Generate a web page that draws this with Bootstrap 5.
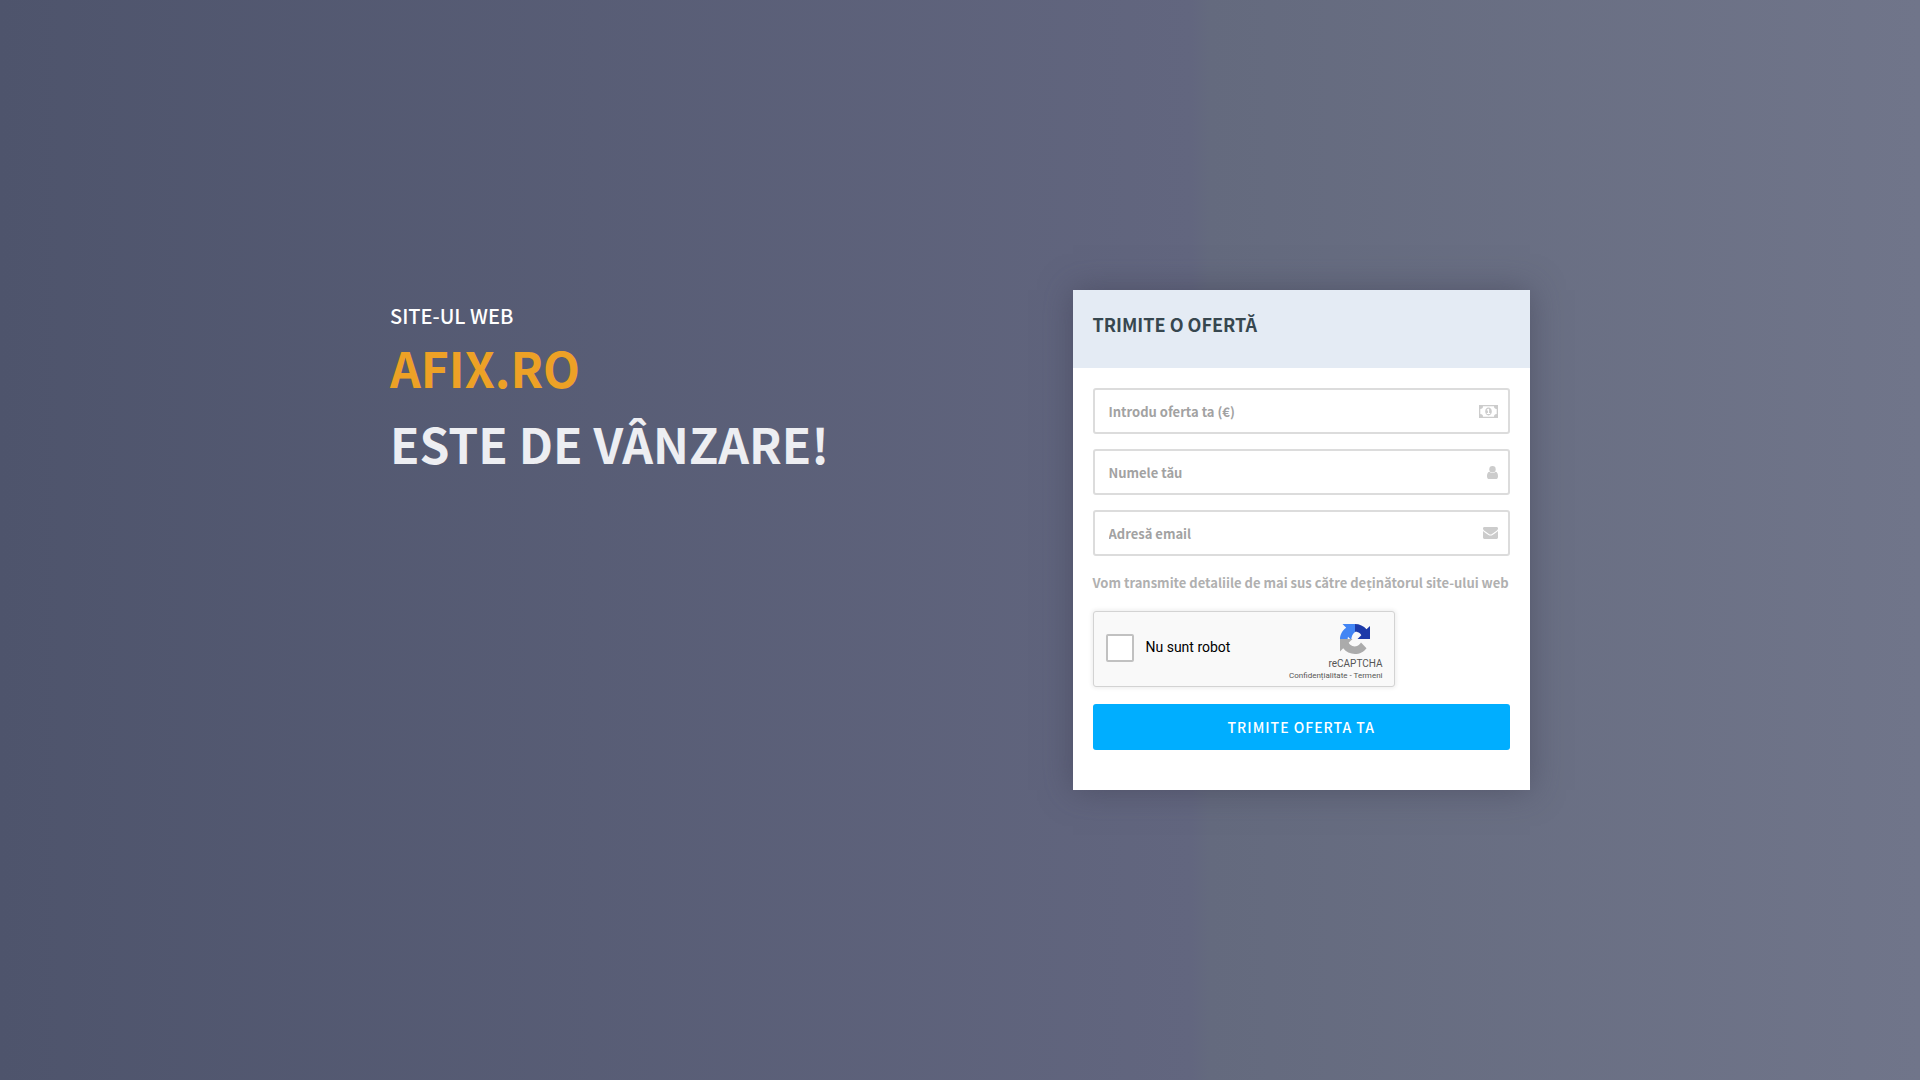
<!DOCTYPE html>
<html lang="ro">
<head>
<meta charset="utf-8">
<meta name="viewport" content="width=device-width, initial-scale=1">
<title>afix.ro este de vânzare</title>
<link href="https://cdn.jsdelivr.net/npm/bootstrap@5.3.0/dist/css/bootstrap.min.css" rel="stylesheet">
<style>
  body {
    font-family: "Noto Sans CJK SC", "Noto Sans", sans-serif;
    font-weight: 500;
    background: linear-gradient(90deg, #4e546c 0%, #62667f 62%, #646a7e 63%, #70758a 100%);
  }
  .sale-container { max-width: 1170px; --bs-gutter-x: 30px; }
  .sale-row { --bs-gutter-x: 30px; }
  .intro-col { padding-top: 14px; }
  .intro { font-size: 20px; line-height: 24px; color: #fff; }
  .domain, .slogan { font-size: 48px; line-height: 60px; font-weight: 700; }
  .domain { color: #eda126; margin: 9px 0 16px; }
  .slogan { color: #edeef2; }
  .offer { box-shadow: 0 0 30px rgba(60, 60, 80, .5); }
  .offer-head { background: #e4ebf4; min-height: 78px; padding: 20px; }
  .offer-head h2 { font-size: 18px; line-height: 28px; font-weight: 700; color: #37474f; }
  .offer-body { padding: 20px 20px 40px; }
  .field-wrap { margin-bottom: 15px; }
  .offer-field { height: 46px; border: 2px solid #dcdcdc; border-radius: 3px; padding: 0 14px; font-size: 13px; font-weight: 700; }
  .offer-field::placeholder { color: #a2a2a2; }
  .field-icon { right: 12px; top: 0; height: 46px; color: #ccc; }
  .hint { font-size: 13px; line-height: 20px; font-weight: 700; color: #b0b0b0; margin: 17px 0 18px; white-space: nowrap; }
  .captcha { font-family: Roboto, sans-serif; font-weight: 400; width: 302px; max-width: 100%; height: 76px; background: #f9f9f9; border: 1px solid #d3d3d3; border-radius: 3px; box-shadow: 0 0 4px 1px rgba(0, 0, 0, .08); padding: 0 11px 0 12px; margin-bottom: 17px; }
  .captcha-check { padding-bottom: 3px; }
  .captcha-box { appearance: none; width: 28px; height: 28px; border: 2px solid #c1c1c1; border-radius: 2px; background: #fff; }
  .captcha-label { font-size: 14px; line-height: 17px; color: #000; }
  .captcha-mark { padding-top: 7px; }
  .captcha-mark svg { margin: 0 9px 4px 0; }
  .captcha-brand { font-size: 10px; line-height: 12px; color: #555; }
  .captcha-links { font-size: 8px; line-height: 12px; color: #555; }
  .offer-btn { height: 46px; border-radius: 3px; background: #00aeff; color: #fff; font-size: 14px; font-weight: 500; letter-spacing: 1px; }
  .offer-btn:hover { background: #0098e0; color: #fff; }
</style>
<script src="https://cdn.jsdelivr.net/npm/bootstrap@5.3.0/dist/js/bootstrap.bundle.min.js"></script>
</head>
<body>
<main class="container sale-container min-vh-100 d-flex flex-column justify-content-center">
  <div class="row sale-row">
    <div class="col-md-7 intro-col">
      <h1 class="mb-0">
        <span class="intro d-block text-uppercase">Site-ul web</span>
        <span class="domain d-block text-uppercase">afix.ro</span>
        <span class="slogan d-block text-uppercase">Este de vânzare!</span>
      </h1>
    </div>
    <div class="col-md-5">
      <form class="offer bg-white" onsubmit="return false">
        <div class="offer-head"><h2 class="m-0 text-uppercase">Trimite o ofertă</h2></div>
        <div class="offer-body">
          <div class="position-relative field-wrap">
            <input class="form-control offer-field" type="text" placeholder="Introdu oferta ta (€)" aria-label="Introdu oferta ta (€)">
            <span class="field-icon position-absolute d-flex align-items-center pe-none">
              <svg width="19" height="13" viewBox="0 0 19 13" aria-hidden="true"><path fill="currentColor" fill-rule="evenodd" d="M0 0h19v13H0zM4 1.3A2.7 2.7 0 0 1 1.3 4v5A2.7 2.7 0 0 1 4 11.700h11A2.700 2.700 0 0 1 17.700 9V4A2.700 2.700 0 0 1 15 1.300zM9.500 2.600c2 0 3.300 1.700 3.300 3.900s-1.300 3.900-3.300 3.900-3.300-1.700-3.300-3.900 1.300-3.900 3.300-3.900zM8.900 3.800 7.600 5l.7.8.6-.5v2.600H7.800V9h3.400V7.900h-1.100V3.800z"/></svg>
            </span>
          </div>
          <div class="position-relative field-wrap">
            <input class="form-control offer-field" type="text" placeholder="Numele tău" aria-label="Numele tău">
            <span class="field-icon position-absolute d-flex align-items-center pe-none">
              <svg width="11" height="13" viewBox="0 0 11 13" aria-hidden="true"><circle cx="5.500" cy="3.200" r="3.200" fill="currentColor"/><path fill="currentColor" d="M2.400 5.800C.5 6.300 0 8.200 0 10.400 0 12 .9 13 2.300 13h6.400c1.400 0 2.300-1 2.300-2.600 0-2.200-.5-4.100-2.400-4.600-1.700 1.600-4.500 1.600-6.200 0z"/></svg>
            </span>
          </div>
          <div class="position-relative field-wrap">
            <input class="form-control offer-field" type="email" placeholder="Adresă email" aria-label="Adresă email">
            <span class="field-icon position-absolute d-flex align-items-center pe-none">
              <svg width="15" height="12" viewBox="0 0 15 12" aria-hidden="true"><path fill="currentColor" d="M0 1.400C0 .6.6 0 1.400 0h12.200c.8 0 1.400.6 1.400 1.400 0 .9-.7 1.800-1.400 2.300L9 7c-1 .7-2 .7-3 0L1.400 3.700C.8 3.300 0 2.300 0 1.400z"/><path fill="currentColor" d="M0 4c1.500 1.300 3.500 2.500 5.100 3.700 1.500 1.200 3.300 1.200 4.800 0C11.500 6.500 13.500 5.300 15 4v6.600c0 .8-.6 1.400-1.400 1.400H1.400C.6 12 0 11.400 0 10.600z"/></svg>
            </span>
          </div>
          <p class="hint">Vom transmite detaliile de mai sus către deținătorul site-ului web</p>
          <div class="captcha d-flex align-items-center">
            <div class="captcha-check d-flex align-items-center">
              <input class="captcha-box flex-shrink-0" type="checkbox" id="robot">
              <label class="captcha-label ms-2 ps-1" for="robot">Nu sunt robot</label>
            </div>
            <div class="captcha-mark ms-auto d-flex flex-column align-items-end">
              <svg width="38" height="30" viewBox="-4 0 38 30" aria-hidden="true">
                <path fill="#1c3aa9" d="M15 0c4.600 0 8.700 2 11.500 5.200L30 2v13H17.500l3.800-3.800c-.4-1-1-1.700-1.800-2.200-.9-.7-2.200-1.300-3.900-1.300L15 8z"/>
                <path fill="#4285f4" d="M15 0H2.500l3.700 3.700C2.300 6.300 0 10.400 0 15h7.700c0-.9.100-1.600.3-2.200l3.200 3.200c.3-3.500 1.400-6.400 3.800-8z"/>
                <path fill="#ababab" d="M0 15v12.500l3.200-3.200C6 27.900 10.200 30 15 30c4.600 0 8.900-2.100 11.500-5.800L21 18.600c-.5 1-1.300 1.800-2.200 2.500-1 .7-2.300 1.300-4.100 1.300-3.500-.2-5.300-2-6-3.600L12.500 15z"/>
              </svg>
              <span class="captcha-brand">reCAPTCHA</span>
              <span class="captcha-links"><a class="text-reset text-decoration-none" href="#">Confidențialitate</a> - <a class="text-reset text-decoration-none" href="#">Termeni</a></span>
            </div>
          </div>
          <button class="btn offer-btn w-100 border-0 text-uppercase" type="submit">Trimite oferta ta</button>
        </div>
      </form>
    </div>
  </div>
</main>
</body>
</html>
